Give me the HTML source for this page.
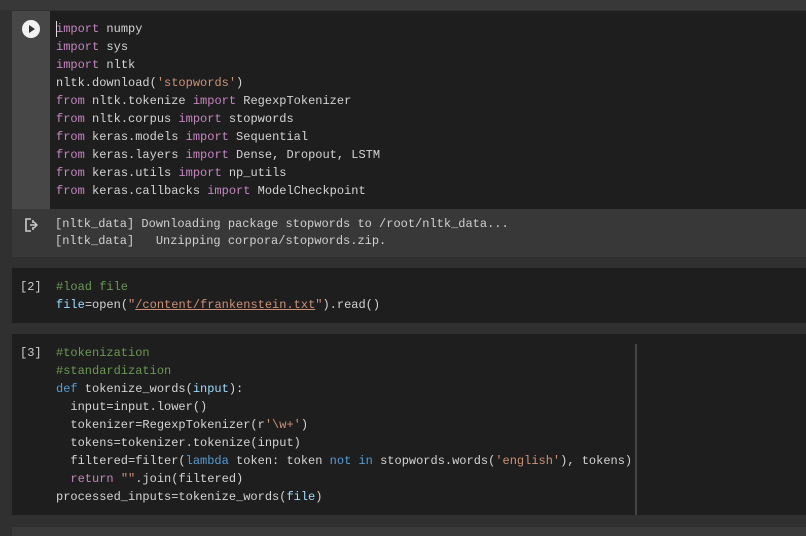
<!DOCTYPE html>
<html><head><style>
*{margin:0;padding:0;box-sizing:border-box}
body{width:806px;height:536px;background:#303030;overflow:hidden;position:relative;font-family:"Liberation Mono",monospace;font-size:12px;color:#d4d4d4}
.abs{position:absolute}
pre{font-family:"Liberation Mono",monospace;font-size:12px;line-height:18px;white-space:pre}
.k{color:#c586c0}.s{color:#ce9178}.c{color:#6a9955}.b{color:#569cd6}.v{color:#9cdcfe}
</style></head><body>
<div class="abs" style="left:0;top:0;width:806px;height:10px;background:#383838"></div>
<div class="abs" style="left:12px;top:11px;width:794px;height:198px;background:#1e1e1e"></div>
<div class="abs" style="left:12px;top:11px;width:38px;height:198px;background:#474747"></div>
<div class="abs" style="left:22px;top:20px;width:18px;height:18px;border-radius:50%;background:#f2f2f2"></div>
<div class="abs" style="left:29px;top:25px;width:0;height:0;border-left:6px solid #333;border-top:4px solid transparent;border-bottom:4px solid transparent"></div>
<pre class="abs" style="left:56px;top:20px"><span class="k">import</span> numpy
<span class="k">import</span> sys
<span class="k">import</span> nltk
nltk.download(<span class="s">'stopwords'</span>)
<span class="k">from</span> nltk.tokenize <span class="k">import</span> RegexpTokenizer
<span class="k">from</span> nltk.corpus <span class="k">import</span> stopwords
<span class="k">from</span> keras.models <span class="k">import</span> Sequential
<span class="k">from</span> keras.layers <span class="k">import</span> Dense, Dropout, LSTM
<span class="k">from</span> keras.utils <span class="k">import</span> np_utils
<span class="k">from</span> keras.callbacks <span class="k">import</span> ModelCheckpoint</pre>
<div class="abs" style="left:56px;top:21px;width:1px;height:16px;background:#ddd"></div>
<div class="abs" style="left:12px;top:209px;width:794px;height:48px;background:#383838"></div>
<svg class="abs" style="left:24px;top:218px" width="16" height="14" viewBox="0 0 16 14"><path d="M7 1H2v12h5M9 2v3M9 9v3" stroke="#ccc" stroke-width="1.6" fill="none"/><path d="M6 7h7M10 4l3 3-3 3" stroke="#ccc" stroke-width="1.4" fill="none"/></svg>
<pre class="abs" style="left:55px;top:216px;line-height:17px;color:#d0d0d0">[nltk_data] Downloading package stopwords to /root/nltk_data...
[nltk_data]   Unzipping corpora/stopwords.zip.</pre>
<div class="abs" style="left:12px;top:268px;width:794px;height:55px;background:#1e1e1e"></div>
<pre class="abs" style="left:20px;top:278px;color:#cfcfcf">[2]</pre>
<pre class="abs" style="left:56px;top:278px"><span class="c">#load file</span>
<span class="v">file</span>=open(<span class="s">"<u>/content/frankenstein.txt</u>"</span>).read()</pre>
<div class="abs" style="left:12px;top:334px;width:794px;height:181px;background:#1e1e1e"></div>
<div class="abs" style="left:635px;top:344px;width:2px;height:171px;background:#444"></div>
<pre class="abs" style="left:20px;top:344px;color:#cfcfcf">[3]</pre>
<pre class="abs" style="left:56px;top:344px"><span class="c">#tokenization</span>
<span class="c">#standardization</span>
<span class="b">def</span> tokenize_words(<span class="v">input</span>):
  input=input.lower()
  tokenizer=RegexpTokenizer(r<span class="s">'\w+'</span>)
  tokens=tokenizer.tokenize(input)
  filtered=filter(<span class="b">lambda</span> token: token <span class="b">not</span> <span class="b">in</span> stopwords.words(<span class="s">'english'</span>), tokens)
  <span class="k">return</span> <span class="s">""</span>.join(filtered)
processed_inputs=tokenize_words(<span class="v">file</span>)</pre>
<div class="abs" style="left:12px;top:527px;width:794px;height:9px;background:#3a3a3a"></div>
</body></html>
